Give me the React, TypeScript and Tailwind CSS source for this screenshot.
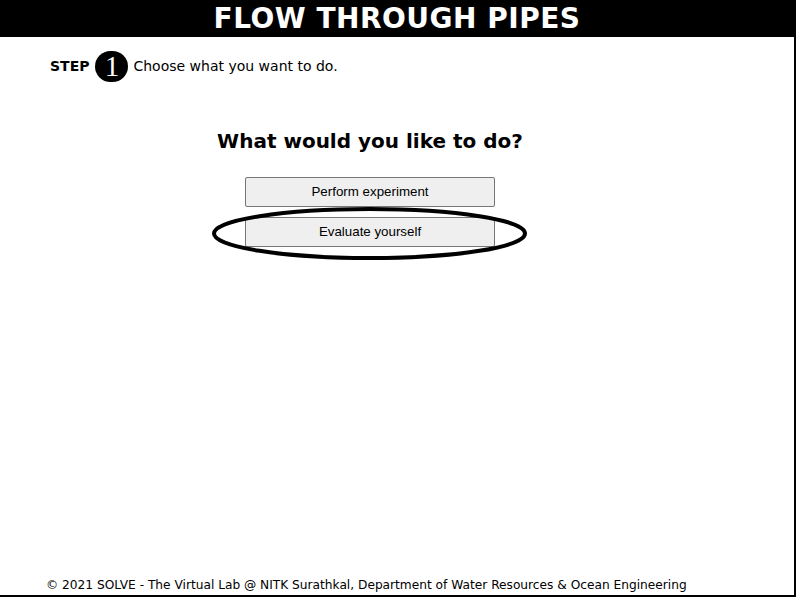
export default function App() {
  return (
    <div className="relative flex h-[597px] w-[796px] flex-col border-r-2 border-b-2 border-black bg-white font-['DejaVu_Sans',Verdana,sans-serif] text-black">
      {/* Title bar */}
      <div className="flex h-[37px] items-center justify-center bg-black">
        <h1 className="text-[28px] font-bold leading-none tracking-[0.5px] text-white">FLOW THROUGH PIPES</h1>
      </div>

      {/* Step line */}
      <div className="mt-[14px] flex items-center pl-[50px]">
        <span className="text-[14px] font-bold">STEP</span>
        <span className="ml-[6px] flex h-[31px] w-[33px] items-center justify-center rounded-full bg-black font-['Liberation_Serif',serif] text-[29px] leading-none text-white">
          1
        </span>
        <span className="ml-[5px] text-[14px]">Choose what you want to do.</span>
      </div>

      {/* Choice */}
      <div className="mt-[49px] flex w-[740px] flex-col items-center">
        <h2 className="text-[20px] font-bold leading-none">What would you like to do?</h2>
        <div className="relative mt-[26px] flex flex-col items-center gap-[10px]">
          <button className="h-[30px] w-[250px] rounded-[2px] border border-[#767676] bg-[#efefef] font-['Liberation_Sans',Arial,sans-serif] text-[13.33px]">
            Perform experiment
          </button>
          <button className="h-[30px] w-[250px] rounded-[2px] border border-[#767676] bg-[#efefef] font-['Liberation_Sans',Arial,sans-serif] text-[13.33px]">
            Evaluate yourself
          </button>
          <svg
            className="pointer-events-none absolute left-[-34px] top-[28px]"
            width="320"
            height="60"
            viewBox="0 0 320 60"
          >
            <ellipse cx="158.5" cy="28.5" rx="155.5" ry="24.5" fill="none" stroke="black" strokeWidth="4" />
          </svg>
        </div>
      </div>

      {/* Footer */}
      <div className="mt-auto mb-[4px] pl-[46px] text-[12.2px] leading-none">
        © 2021 SOLVE - The Virtual Lab @ NITK Surathkal, Department of Water Resources &amp; Ocean Engineering
      </div>
    </div>
  );
}
